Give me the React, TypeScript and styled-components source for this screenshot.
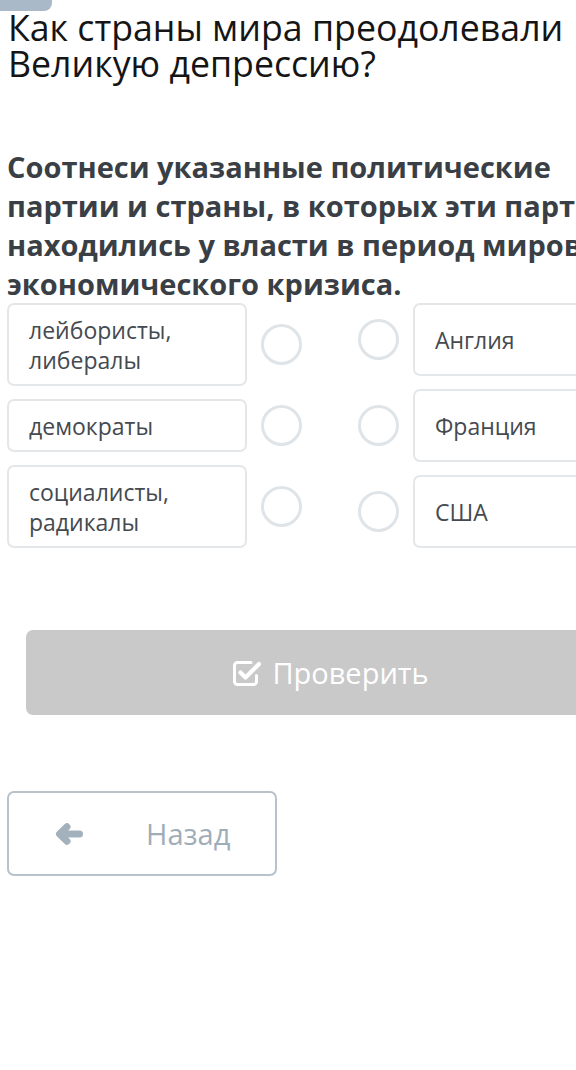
import React from "react";
import styled, { createGlobalStyle } from "styled-components";

const Global = createGlobalStyle`
  html, body {
    margin: 0;
    padding: 0;
    background: #ffffff;
    overflow: hidden;
  }
  body {
    font-family: "Open Sans", "Noto Sans", sans-serif;
  }
`;

const Page = styled.div`
  width: 646px;
  padding-left: 7px;
  display: flex;
  flex-direction: column;
`;

const Tab = styled.div`
  width: 52px;
  height: 11px;
  margin-left: -7px;
  background: #aab9c7;
  border-bottom-right-radius: 8px;
`;

const Title = styled.h1`
  margin: -2px 0 0 1px;
  font-size: 35.7px;
  line-height: 36px;
  font-weight: 400;
  color: #151515;
`;

const Prompt = styled.p`
  margin: 66px 0 0 0;
  font-size: 29px;
  line-height: 39px;
  font-weight: 700;
  color: #3a3f46;
  white-space: nowrap;
`;

const Board = styled.div`
  display: grid;
  grid-template-columns: 295px 295px;
  column-gap: 56px;
  align-items: start;
`;

const Column = styled.div`
  display: flex;
  flex-direction: column;
  gap: 13px;
`;

const Row = styled.div`
  display: flex;
  align-items: center;
  gap: 14px;
`;

const Card = styled.div<{ $tall?: boolean }>`
  box-sizing: border-box;
  width: 240px;
  min-height: ${(p) => (p.$tall ? "73px" : "0")};
  display: flex;
  align-items: center;
  padding: 9.5px 20px;
  border: 2px solid #e4e7ea;
  border-radius: 7px;
  font-size: 23px;
  line-height: 30px;
  color: #454a50;
`;

const Dot = styled.div`
  box-sizing: border-box;
  width: 41px;
  height: 41px;
  border-radius: 50%;
  border: 3px solid #dfe4e8;
  flex: none;
`;

const CheckButton = styled.button`
  margin: 82px 19px 0 19px;
  height: 85px;
  border: none;
  border-radius: 7px;
  background: #c9c9c9;
  color: #ffffff;
  font-family: "Open Sans", "Noto Sans", sans-serif;
  font-size: 29px;
  display: flex;
  align-items: center;
  justify-content: center;
  gap: 11px;
  padding: 0;
`;

const BackButton = styled.button`
  box-sizing: border-box;
  margin-top: 76px;
  width: 270px;
  height: 85px;
  border: 2px solid #b7c2cc;
  border-radius: 7px;
  background: #ffffff;
  color: #9fadb9;
  font-family: "Open Sans", "Noto Sans", sans-serif;
  font-size: 29px;
  display: flex;
  align-items: center;
  padding: 0 0 0 46px;
  gap: 63px;
`;

const ArrowIcon = () => (
  <svg width="28" height="22" viewBox="0 0 28 22" fill="none">
    <path
      d="M24.5 11H5M12 3.8L4.5 11L12 18.2"
      stroke="#a3b1bd"
      strokeWidth="7"
      strokeLinecap="round"
      strokeLinejoin="round"
    />
  </svg>
);

const CheckIcon = () => (
  <svg width="30" height="30" viewBox="0 0 30 30" fill="none">
    <path
      d="M20 4.5H6.5a3 3 0 0 0-3 3v16a3 3 0 0 0 3 3h16a3 3 0 0 0 3-3v-6"
      stroke="#ffffff"
      strokeWidth="3"
      strokeLinecap="round"
    />
    <path
      d="M9.5 14.5l5 5L28 6"
      stroke="#ffffff"
      strokeWidth="4.2"
      strokeLinecap="round"
      strokeLinejoin="round"
    />
  </svg>
);

const parties = ["лейбористы, либералы", "демократы", "социалисты, радикалы"];
const countries = ["Англия", "Франция", "США"];

export default function App() {
  return (
    <>
      <Global />
      <Page>
        <Tab />
        <Title>Как страны мира преодолевали Великую депрессию?</Title>
        <Prompt>
          Соотнеси указанные политические
          <br />
          партии и страны, в которых эти партии
          <br />
          находились у власти в период мирового
          <br />
          экономического кризиса.
        </Prompt>
        <Board>
          <Column>
            {parties.map((p) => (
              <Row key={p}>
                <Card>{p}</Card>
                <Dot />
              </Row>
            ))}
          </Column>
          <Column>
            {countries.map((c) => (
              <Row key={c}>
                <Dot />
                <Card $tall>{c}</Card>
              </Row>
            ))}
          </Column>
        </Board>
        <CheckButton>
          <CheckIcon />
          Проверить
        </CheckButton>
        <BackButton>
          <ArrowIcon />
          Назад
        </BackButton>
      </Page>
    </>
  );
}
